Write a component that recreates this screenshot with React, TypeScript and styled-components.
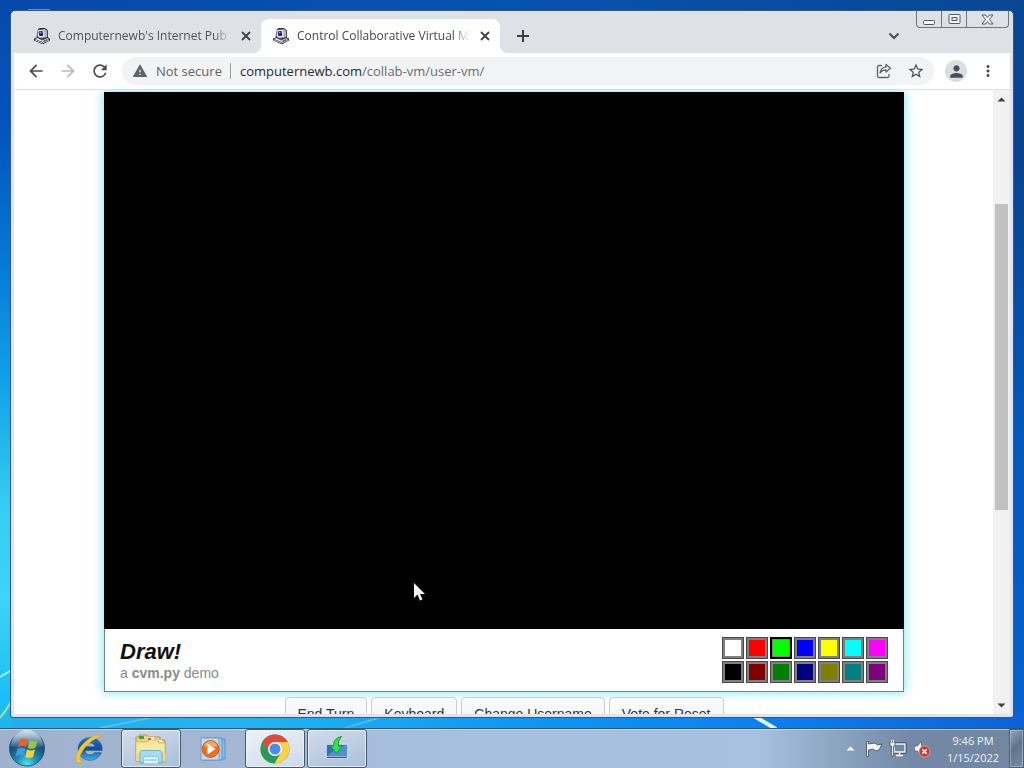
import React from "react";
import styled, { createGlobalStyle } from "styled-components";
import {
  MdArrowBack,
  MdArrowForward,
  MdRefresh,
  MdWarning,
  MdStarBorder,
  MdPerson,
  MdMoreVert,
} from "react-icons/md";

const GlobalStyle = createGlobalStyle`
  *, *::before, *::after { box-sizing: border-box; }
  body { margin: 0; font-family: "Open Sans", "Noto Sans", sans-serif; }
  button { font: inherit; color: inherit; border: 0; padding: 0; background: none; }
`;

/* Desktop */

const Desktop = styled.div`
  position: relative;
  display: flex;
  flex-direction: column;
  height: 100vh;
  overflow: hidden;
  background:
    linear-gradient(180deg, #0549ac 0%, #0455c0 18%, #0678d8 34%, #12a2e8 50%, #35cdf3 66%, #3ed3f7 78%, #1cc0f5 90%, #1aa8ea 100%) left / 12px 100% no-repeat,
    linear-gradient(90deg, #22aeea 0%, #22b4f2 24%, #0d98f5 50%, #0a80f0 75%, #0a62d8 100%) bottom / 100% 56px no-repeat,
    linear-gradient(180deg, #094794 0%, #08428c 20%, #0457ba 55%, #0563cf 100%) right / 12px 100% no-repeat,
    linear-gradient(90deg, #0549ac 0%, #0653b0 50%, #094794 100%);
`;

const Wallpaper = styled.svg`
  position: absolute;
  inset: 0;
  width: 100%;
  height: 100%;
`;

const WindowArea = styled.main`
  position: relative;
  display: flex;
  flex: 1;
  min-height: 0;
  padding: 10px;
`;

const BrowserWindow = styled.section`
  display: flex;
  flex: 1;
  flex-direction: column;
  min-width: 0;
  padding: 0 3px 3px;
  border: 1px solid #34587f;
  border-radius: 5px 5px 3px 3px;
  background: linear-gradient(180deg, #dee1e6 0, #dee1e6 42px, #dfe3f1 80px, #e2e2ea 100%);
`;

/* Tab strip */

const TabStrip = styled.header`
  display: flex;
  height: 42px;
  padding-left: 8px;
`;

const Tab = styled.div<{ $active?: boolean }>`
  position: relative;
  display: flex;
  flex: 0 1 239px;
  align-items: center;
  min-width: 0;
  margin-top: 8px;
  padding: 0 7px 0 12px;
  gap: 8px;
  border-radius: 8px 8px 0 0;
  background: ${(p) => (p.$active ? "#ffffff" : "transparent")};
  color: ${(p) => (p.$active ? "#45484b" : "#505357")};

  &::before,
  &::after {
    content: "";
    position: absolute;
    bottom: 0;
    display: ${(p) => (p.$active ? "block" : "none")};
    width: 8px;
    height: 8px;
  }
  &::before {
    right: 100%;
    background: radial-gradient(circle at 0 0, transparent 8px, #ffffff 8px);
  }
  &::after {
    left: 100%;
    background: radial-gradient(circle at 100% 0, transparent 8px, #ffffff 8px);
  }
`;

const TabTitle = styled.span`
  flex: 1;
  min-width: 0;
  overflow: hidden;
  font-size: 12px;
  line-height: 16px;
  white-space: nowrap;
  mask-image: linear-gradient(90deg, #000 calc(100% - 16px), transparent);
`;

const IconButton = styled.button<{ $size?: number; $color?: string }>`
  display: flex;
  flex: none;
  align-items: center;
  justify-content: center;
  width: ${(p) => p.$size ?? 32}px;
  height: ${(p) => p.$size ?? 32}px;
  color: ${(p) => p.$color ?? "#4a4d51"};
`;

const StripButton = styled(IconButton)`
  margin-top: 9px;
`;

const NewTabButton = styled(StripButton)`
  margin-left: 7px;
`;

const Spacer = styled.div`
  flex: 1;
`;

const CaptionButtons = styled.div`
  display: flex;
  height: 17px;
  margin: 0 1px 0 6px;
  border: 1px solid #72767b;
  border-top: 0;
  border-radius: 0 0 4px 4px;
`;

const CaptionButton = styled.button<{ $width: number }>`
  display: flex;
  align-items: center;
  justify-content: center;
  width: ${(p) => p.$width}px;
  & + & {
    border-left: 1px solid #72767b;
  }
`;

/* Toolbar */

const Toolbar = styled.nav`
  display: flex;
  align-items: center;
  height: 37px;
  padding: 0 6px;
  border-bottom: 1px solid #dcdee1;
  background: #ffffff;
`;

const Omnibox = styled.form`
  display: flex;
  flex: 1;
  align-items: center;
  min-width: 0;
  height: 28px;
  margin: 0 6px;
  padding: 0 2px 0 10px;
  border-radius: 14px;
  background: #f1f3f4;
  color: #5f6368;
  font-size: 13px;
  line-height: 20px;
`;

const Security = styled.span`
  margin-left: 8px;
  padding-right: 8px;
  border-right: 1px solid #9a9da1;
  line-height: 16px;
  white-space: nowrap;
`;

const Address = styled.a`
  flex: 1;
  min-width: 0;
  margin-left: 9px;
  overflow: hidden;
  color: #6a6d71;
  text-decoration: none;
  white-space: nowrap;
`;

const Host = styled.span`
  color: #2a2c2f;
`;

const Avatar = styled.button`
  display: flex;
  align-items: center;
  justify-content: center;
  width: 22px;
  height: 22px;
  margin: 0 5px;
  border-radius: 50%;
  background: #dadde3;
  color: #474e5b;
`;

/* Page */

const Viewport = styled.div`
  display: flex;
  flex: 1;
  min-height: 0;
  background: #ffffff;
`;

const Page = styled.div`
  display: flex;
  flex: 1;
  flex-direction: column;
  align-items: center;
  min-width: 0;
  padding: 2px 16px 0;
  overflow: hidden;
  gap: 5px;
  font-family: "Liberation Sans", Arial, sans-serif;
`;

const Display = styled.section`
  flex: none;
  width: 100%;
  max-width: 800px;
  box-shadow: 0 0 10px 1px #8ae6f4;
`;

const Screen = styled.div`
  position: relative;
  aspect-ratio: 800 / 537;
  background: #000000;
`;

const Pointer = styled.svg`
  position: absolute;
  top: 490px;
  left: 309px;
`;

const DemoBar = styled.div`
  display: flex;
  align-items: flex-start;
  justify-content: space-between;
  padding: 8px 15px;
  border: 1px solid #68848f;
  border-top: 0;
  background: #ffffff;
`;

const DemoTitle = styled.h1`
  margin: 2px 0 0;
  color: #101010;
  font-size: 22px;
  font-style: italic;
  line-height: 26px;
`;

const DemoNote = styled.p`
  margin: 0;
  color: #8a8a8a;
  font-size: 14px;
  line-height: 16px;
`;

const Palette = styled.div`
  display: grid;
  grid-template-columns: repeat(7, 22px);
  gap: 2px;
`;

const Swatch = styled.button<{ $color: string; $selected: boolean }>`
  height: 22px;
  border: ${(p) => (p.$selected ? "2px solid #000000" : "1px solid #484848")};
  background: ${(p) => p.$color};
  box-shadow: inset 0 0 0 ${(p) => (p.$selected ? 1 : 2)}px #808080;
`;

const Actions = styled.div`
  display: flex;
  flex: none;
  gap: 4px;
`;

const ActionButton = styled.button`
  padding: 6px 12px;
  border: 1px solid #c8cccc;
  border-radius: 4px;
  background: linear-gradient(180deg, #f8fcfd 0, #f6f2f1 100%);
  color: #333333;
  font-size: 14px;
  line-height: 20px;
`;

const Scrollbar = styled.div`
  display: flex;
  flex: none;
  flex-direction: column;
  align-items: center;
  width: 17px;
  margin-left: -1px;
  background: #f1f1f1;
`;

const ScrollArrow = styled.button`
  display: flex;
  align-items: center;
  justify-content: center;
  width: 17px;
  height: 18px;
`;

const ScrollTrack = styled.div`
  display: grid;
  flex: 1;
  grid-template-rows: 96fr 306fr 186fr;
`;

const ScrollThumb = styled.div`
  grid-row: 2;
  width: 13px;
  background: #c1c1c1;
`;

/* Taskbar */

const Taskbar = styled.footer`
  position: relative;
  display: flex;
  flex: none;
  height: 40px;
  border-top: 1px solid #2f5878;
  background: linear-gradient(90deg, #9fb2cd 0%, #a3b6d2 20%, #a7bfdd 42%, #a8c1de 74%, #8ca3c0 82%, #7389a7 89%, #71869f 100%);
  box-shadow: inset 0 1px 0 rgba(205, 228, 245, 0.65);
`;

const StartButton = styled.button`
  width: 54px;
`;

const TaskButton = styled.button<{ $state?: "open" | "active" }>`
  display: flex;
  align-items: center;
  justify-content: center;
  width: 60px;
  border: 1px solid ${(p) => (p.$state ? "#44596f" : "transparent")};
  border-radius: 3px;
  background: ${(p) =>
    p.$state === "active"
      ? "linear-gradient(160deg, #f0f3f8, #ccd8e8)"
      : p.$state === "open"
        ? "linear-gradient(160deg, #d2dceb, #a9bfdb)"
        : "transparent"};
  box-shadow: ${(p) => (p.$state ? "inset 0 0 0 1px rgba(240, 248, 255, 0.75)" : "none")};
`;

const TaskList = styled.div`
  display: flex;
  gap: 2px;
  margin-left: 5px;
`;

const Tray = styled.div`
  display: flex;
  align-items: center;
  gap: 6px;
  margin-right: 5px;
  margin-left: auto;
`;

const TrayButton = styled.button`
  display: flex;
  align-items: center;
  justify-content: center;
  width: 18px;
  height: 20px;
`;

const Clock = styled.time`
  width: 62px;
  margin-left: 5px;
  color: #eef4fb;
  font-size: 11px;
  line-height: 17px;
  text-align: center;
  white-space: nowrap;
`;

const ShowDesktop = styled.button`
  width: 15px;
  border: 1px solid #4b6078;
  background: linear-gradient(135deg, #93a5b9 0%, #5f748b 45%, #788ca5 100%);
  box-shadow: inset 0 0 0 1px rgba(190, 208, 226, 0.5);
`;

/* Drawings */

const ComputerIcon = () => (
  <svg width="16" height="16" viewBox="0 0 16 16" aria-hidden="true">
    <path d="M4 1 6 0h5l3 2.500v7L10 11l-5.500-.5L2.500 8.500z" fill="#2c2c3c" />
    <path d="M9 1.500 11 1l2.200 2v6L11 10z" fill="#b4b4bc" />
    <path d="M4 2 9.500 1.500l1.500 8-6 .3L3.500 8z" fill="#e6e6ec" />
    <path d="m4.500 3.500 4-.5.7 4.700-3.700.3z" fill="#10107e" />
    <path d="M5.500 4h2v1.500h-2z" fill="#8092ed" />
    <path d="M0 10.500 3.500 9l4.500 2.500 5-2.500 3 1.500v2L9.500 16H8l-8-3.500z" fill="#2c2c3c" />
    <path d="m1 11 2.500-1 4.500 2.500 5-2.300 2 .8-6.500 3z" fill="#efeff0" />
    <path d="m1 12 7.500 3L15 12" stroke="#c4c4ca" fill="none" />
    <path d="m9.500 13 3.500-1.500" stroke="#54546b" fill="none" />
  </svg>
);

const CloseIcon = () => (
  <svg width="10" height="10" viewBox="0 0 10 10" aria-hidden="true">
    <path d="m1 1 8 8m0-8-8 8" stroke="#3c4043" strokeWidth="1.800" />
  </svg>
);

const PlusIcon = () => (
  <svg width="12" height="12" viewBox="0 0 12 12" aria-hidden="true">
    <path d="M6 0v12M0 6h12" stroke="#3c4043" strokeWidth="2" />
  </svg>
);

const ChevronIcon = () => (
  <svg width="12" height="8" viewBox="0 0 12 8" aria-hidden="true">
    <path d="m1.500 1.500 4.500 4.500 4.500-4.500" fill="none" stroke="#4a4d51" strokeWidth="2" />
  </svg>
);

const ShareIcon = () => (
  <svg width="16" height="16" viewBox="0 0 16 16" fill="none" stroke="#5f6368" strokeWidth="1.300" strokeLinejoin="round" aria-hidden="true">
    <path d="M6 2.500H3A1.500 1.500 0 0 0 1.500 4v9A1.500 1.500 0 0 0 3 14.500h8.500A1.500 1.500 0 0 0 13 13v-2" />
    <path d="M10 1.500 14.500 5.300 10 9V6.800C7.500 6.800 5.500 7.800 4 10c.3-3.500 2.500-5.700 6-6.200z" />
  </svg>
);

const StartOrb = () => (
  <svg width="54" height="39" viewBox="0 0 54 39" aria-hidden="true">
    <defs>
      <radialGradient id="orb" cx="50%" cy="95%" r="85%">
        <stop offset="0" stopColor="#55e5ec" />
        <stop offset="0.35" stopColor="#1b8fb8" />
        <stop offset="0.75" stopColor="#174a78" />
        <stop offset="1" stopColor="#3c6f98" />
      </radialGradient>
      <linearGradient id="orbShine" x1="0" y1="0" x2="0" y2="1">
        <stop offset="0" stopColor="#ffffff" stopOpacity="0.8" />
        <stop offset="1" stopColor="#ffffff" stopOpacity="0.1" />
      </linearGradient>
    </defs>
    <circle cx="27" cy="19.500" r="17.500" fill="url(#orb)" stroke="#2c5778" />
    <path d="M11 17a16 16 0 0 1 32 0c-6 3-10-1-16-1s-11 4-16 1z" fill="url(#orbShine)" />
    <path d="M20 10.500c3-1.500 5.500-1.300 8 .2l-2 7.500c-2.500-1.500-5-1.500-8 0z" fill="#ed6024" />
    <path d="M29.500 11.300c2.500 1.300 5 1.300 8 0l-2 7.500c-3 1.200-5.500 1.200-8 0z" fill="#93c83e" />
    <path d="M17.500 19.700c3-1.500 5.500-1.300 8 .2l-2 7.500c-2.500-1.500-5-1.500-8 0z" fill="#3c9be2" />
    <path d="M27 20.500c2.500 1.300 5 1.300 8 0L33 28c-3 1.200-5.500 1.200-8 0z" fill="#fccb35" />
  </svg>
);

const ExplorerE = () => (
  <svg width="32" height="32" viewBox="0 0 34 34" aria-hidden="true">
    <defs>
      <linearGradient id="ie" x1="0" y1="0" x2="0" y2="1">
        <stop offset="0" stopColor="#2a6fc0" />
        <stop offset="0.5" stopColor="#154f94" />
        <stop offset="1" stopColor="#39b4ee" />
      </linearGradient>
    </defs>
    <path
      d="M18 5C10.500 5 5.500 10.500 5.500 17S10.500 29 18 29c5.500 0 10-3 12-8h-7.500c-1 1.500-2.500 2.200-4.500 2.200-3 0-5-1.700-5.300-4.700H31C31.500 10.500 26 5 18 5zm-5 9.500c.5-2.500 2.500-4 5.200-4s4.600 1.500 5 4z"
      fill="url(#ie)"
      stroke="#15508e"
      strokeWidth="0.600"
      fillRule="evenodd"
    />
    <path d="M31.500 3C26-.5 12 7 6 18 2.500 24.500 2 31 5.500 32c2 .5 4.500-1 6.500-2.500-2 .8-4 .8-4.500-1-1-3.500 2-10 7.500-15.500C21 7.500 27 3.500 31.500 3z" fill="#f2c838" stroke="#c99d22" strokeWidth="0.500" />
  </svg>
);

const FolderIcon = () => (
  <svg width="34" height="32" viewBox="0 0 34 32" aria-hidden="true">
    <path d="M2 4h3V2h8l2 2h11v3h5v21H2z" fill="#ead27a" stroke="#b8983c" />
    <path d="M5 3h5v3H5z" fill="#43a047" />
    <path d="M13 4h7v3h-7z" fill="#f6f6f6" />
    <path d="M14 5h3v2h-3z" fill="#d84343" />
    <path d="M22 7h6v2h-6z" fill="#f6f6f6" />
    <path d="M22 8h3v1h-3z" fill="#377bd0" />
    <path d="M2 9h11l2-2h8l2 3h6v18H2z" fill="#f8e8a0" stroke="#cdb35c" strokeWidth="0.700" />
    <path d="M2.500 20h29v7.500h-29z" fill="#f2d878" />
    <path d="M6 20c0-2 1-2.500 2.500-2.500h17c1.500 0 2.500.5 2.500 2.500v10h-4v-6H10v6H6z" fill="#a5dcf4" stroke="#55a6cf" strokeWidth="0.800" />
    <path d="M10 24h14v6H10z" fill="#ddf4fc" />
    <path d="M11 27h12" stroke="#72bddf" />
  </svg>
);

const MediaPlayerIcon = () => (
  <svg width="30" height="30" viewBox="0 0 30 30" aria-hidden="true">
    <path d="M9 5h18v20H9z" fill="#8dbfe3" stroke="#4a8cc0" strokeWidth="0.800" />
    <path d="M6 4h18v22H6z" fill="#a5cdea" stroke="#3f88bf" strokeWidth="0.800" />
    <path d="M3 4h18v22H3z" fill="#c0ddf0" stroke="#599dcc" strokeWidth="0.800" />
    <circle cx="12.500" cy="15" r="8.500" fill="#ec6f20" stroke="#ca4f13" strokeWidth="0.800" />
    <path d="M5.500 12a7.500 7.500 0 0 1 14 0c-4 2-9 1-14 0z" fill="#f8a362" />
    <path d="M9.500 9.500v11l8-5.500z" fill="#ffffff" />
  </svg>
);

const ChromeIcon = () => (
  <svg width="30" height="30" viewBox="0 0 30 30" aria-hidden="true">
    <circle cx="15" cy="15" r="14.500" fill="#4da353" />
    <path d="M15 15 2.440 7.750A14.500 14.500 0 0 1 27.560 7.750H15z" fill="#dd4b3e" />
    <path d="M2.440 7.750 8.700 18.600 15 15V8H8z" fill="#dd4b3e" />
    <path d="M2.440 7.750A14.500 14.500 0 0 0 14.500 29.500L21 18.500 15 15l-6.300 3.600z" fill="#2c995a" />
    <path d="M15 8h12.560A14.500 14.500 0 0 1 14.500 29.500L21 18.500z" fill="#fbd14b" />
    <circle cx="15" cy="15" r="7" fill="#f4f6f7" />
    <circle cx="15" cy="15" r="5.500" fill="#4b8bee" />
  </svg>
);

const InstallIcon = () => (
  <svg width="26" height="30" viewBox="0 0 26 30" aria-hidden="true">
    <path d="M2 10h22v14H2z" fill="#8fb8dd" stroke="#cfdeed" />
    <path d="M3 11h20v11H3z" fill="#3470b5" />
    <path d="M3 22 14 13l9-2v11z" fill="#5590cd" />
    <path d="M3 23.500h20" stroke="#2b6093" />
    <path d="M17.500 2.500C11 4 9.500 8 9.500 12H6.500l6 7.500L18 12h-3.500c-.5-4 .5-6 3-9.500z" fill="#35e052" stroke="#159a30" />
  </svg>
);

const FlagIcon = () => (
  <svg width="18" height="18" viewBox="0 0 18 18" aria-hidden="true">
    <path d="M1.500 1.500v15h2V10l5-1 2 2 3.500-1 3-6-4.500 1-2.500-2-6.500 1V1.500z" fill="#f5f8fb" stroke="#35465b" strokeWidth="0.800" />
  </svg>
);

const NetworkIcon = () => (
  <svg width="18" height="18" viewBox="0 0 18 18" aria-hidden="true">
    <path d="M5 4h11v8H5z" fill="#657b93" stroke="#27384d" strokeWidth="3" />
    <path d="M5 4h11v8H5z" fill="#74899f" stroke="#f3f7fb" strokeWidth="1.400" />
    <path d="M7 15.500h7M10.500 12v3" stroke="#f3f7fb" strokeWidth="1.400" />
    <path d="M1 2h5v4H4.500v10h-2V6H1z" fill="#f3f7fb" stroke="#33465b" strokeWidth="0.700" />
    <path d="M2.500 0v2M4.500 0v2" stroke="#f3f7fb" />
  </svg>
);

const MutedIcon = () => (
  <svg width="18" height="18" viewBox="0 0 18 18" aria-hidden="true">
    <path d="M1.500 6h3l4-4.500v14L4.500 11h-3z" fill="#f5f8fb" stroke="#4a5b70" strokeWidth="0.700" />
    <circle cx="11.500" cy="11.500" r="5.500" fill="#cf3830" stroke="#f0c4c0" strokeWidth="0.600" />
    <path d="m9.300 9.300 4.400 4.400m0-4.400-4.400 4.400" stroke="#ffffff" strokeWidth="1.600" />
  </svg>
);

const TriangleIcon = ({ down = false, color = "#404040" }: { down?: boolean; color?: string }) => (
  <svg width="9" height="5" viewBox="0 0 9 5" aria-hidden="true">
    <path d={down ? "M.5.500h8l-4 4z" : "M.5 4.500h8l-4-4z"} fill={color} />
  </svg>
);

const TABS = [
  { title: "Computernewb's Internet Pub Hub", active: false },
  { title: "Control Collaborative Virtual Machines", active: true },
];

const COLORS = [
  ["White", "#ffffff"],
  ["Red", "#ff0000"],
  ["Lime", "#00ff00"],
  ["Blue", "#0000ff"],
  ["Yellow", "#ffff00"],
  ["Cyan", "#00ffff"],
  ["Magenta", "#ff00ff"],
  ["Black", "#000000"],
  ["Maroon", "#800000"],
  ["Green", "#008000"],
  ["Navy", "#000080"],
  ["Olive", "#808000"],
  ["Teal", "#008080"],
  ["Purple", "#800080"],
];

const ACTIONS = ["End Turn", "Keyboard", "Change Username", "Vote for Reset"];

export default function App() {
  const [selected, setSelected] = React.useState("Lime");

  return (
    <Desktop>
      <GlobalStyle />
      <Wallpaper viewBox="0 0 1024 768" preserveAspectRatio="none" aria-hidden="true">
        <path d="M0 677 12 670" stroke="#a8ebfb" strokeWidth="2" />
        <path d="M0 718Q8 708 12 700" stroke="#a8e08a" strokeWidth="2" fill="none" />
        <path d="M345 728 385 716" stroke="#4cb8f4" strokeWidth="2" />
        <path d="M100 728 150 718" stroke="#4cc2ee" strokeWidth="2" />
        <path d="M754 716 776 729" stroke="#e3f3ff" strokeWidth="4" />
        <path d="M28 10h22" stroke="#b9d0ee" strokeWidth="1" />
      </Wallpaper>

      <WindowArea>
        <BrowserWindow>
          <TabStrip>
            {TABS.map((tab) => (
              <Tab key={tab.title} $active={tab.active}>
                <ComputerIcon />
                <TabTitle>{tab.title}</TabTitle>
                <IconButton $size={16} aria-label="Close tab">
                  <CloseIcon />
                </IconButton>
              </Tab>
            ))}
            <NewTabButton aria-label="New tab">
              <PlusIcon />
            </NewTabButton>
            <Spacer />
            <StripButton aria-label="Search tabs">
              <ChevronIcon />
            </StripButton>
            <CaptionButtons>
              <CaptionButton $width={24} aria-label="Minimize">
                <svg width="13" height="13" viewBox="0 0 13 13" aria-hidden="true">
                  <rect x="0.500" y="7.500" width="11" height="4" rx="1" fill="#f7f8f9" stroke="#55595e" />
                </svg>
              </CaptionButton>
              <CaptionButton $width={25} aria-label="Maximize">
                <svg width="13" height="13" viewBox="0 0 13 13" aria-hidden="true">
                  <rect x="1" y="1.500" width="11" height="9" rx="1" fill="#f7f8f9" stroke="#55595e" />
                  <rect x="4" y="4.500" width="5" height="3" fill="#dee1e6" stroke="#55595e" />
                </svg>
              </CaptionButton>
              <CaptionButton $width={42} aria-label="Close">
                <svg width="13" height="13" viewBox="0 0 13 13" aria-hidden="true">
                  <path d="M1 2h3.500l2 2.500 2-2.500H12L8.500 6.500 12 11H8.500l-2-2.500-2 2.500H1l3.500-4.500z" fill="#f7f8f9" stroke="#55595e" />
                </svg>
              </CaptionButton>
            </CaptionButtons>
          </TabStrip>

          <Toolbar>
            <IconButton aria-label="Back">
              <MdArrowBack size={20} />
            </IconButton>
            <IconButton aria-label="Forward" $color="#b8babd">
              <MdArrowForward size={20} />
            </IconButton>
            <IconButton aria-label="Reload">
              <MdRefresh size={20} />
            </IconButton>
            <Omnibox onSubmit={(e) => e.preventDefault()}>
              <MdWarning size={16} />
              <Security>Not secure</Security>
              <Address href="#address">
                <Host>computernewb.com</Host>/collab-vm/user-vm/
              </Address>
              <IconButton type="button" aria-label="Share">
                <ShareIcon />
              </IconButton>
              <IconButton type="button" aria-label="Bookmark">
                <MdStarBorder size={18} />
              </IconButton>
            </Omnibox>
            <Avatar aria-label="Profile">
              <MdPerson size={19} />
            </Avatar>
            <IconButton aria-label="Menu">
              <MdMoreVert size={18} />
            </IconButton>
          </Toolbar>

          <Viewport>
            <Page>
              <Display>
                <Screen>
                  <Pointer width="13" height="20" viewBox="0 0 13 20" aria-hidden="true">
                    <path d="M1 1v15l3.500-3.500L7 18.500l2.500-1L7 12h5z" fill="#f4f4f4" />
                  </Pointer>
                </Screen>
                <DemoBar>
                  <div>
                    <DemoTitle>Draw!</DemoTitle>
                    <DemoNote>
                      a <b>cvm.py</b> demo
                    </DemoNote>
                  </div>
                  <Palette>
                    {COLORS.map(([name, value]) => (
                      <Swatch
                        key={name}
                        aria-label={name}
                        $color={value}
                        $selected={name === selected}
                        onClick={() => setSelected(name)}
                      />
                    ))}
                  </Palette>
                </DemoBar>
              </Display>
              <Actions>
                {ACTIONS.map((label) => (
                  <ActionButton key={label}>{label}</ActionButton>
                ))}
              </Actions>
            </Page>
            <Scrollbar>
              <ScrollArrow aria-label="Scroll up">
                <TriangleIcon />
              </ScrollArrow>
              <ScrollTrack>
                <ScrollThumb />
              </ScrollTrack>
              <ScrollArrow aria-label="Scroll down">
                <TriangleIcon down />
              </ScrollArrow>
            </Scrollbar>
          </Viewport>
        </BrowserWindow>
      </WindowArea>

      <Taskbar>
        <StartButton aria-label="Start">
          <StartOrb />
        </StartButton>
        <TaskList>
          <TaskButton aria-label="Internet Explorer">
            <ExplorerE />
          </TaskButton>
          <TaskButton $state="open" aria-label="Windows Explorer">
            <FolderIcon />
          </TaskButton>
          <TaskButton aria-label="Media Player">
            <MediaPlayerIcon />
          </TaskButton>
          <TaskButton $state="active" aria-label="Chrome">
            <ChromeIcon />
          </TaskButton>
          <TaskButton $state="open" aria-label="Installer">
            <InstallIcon />
          </TaskButton>
        </TaskList>
        <Tray>
          <TrayButton aria-label="Show hidden icons">
            <TriangleIcon color="#f3f7fb" />
          </TrayButton>
          <TrayButton aria-label="Action Center">
            <FlagIcon />
          </TrayButton>
          <TrayButton aria-label="Network">
            <NetworkIcon />
          </TrayButton>
          <TrayButton aria-label="Volume">
            <MutedIcon />
          </TrayButton>
          <Clock dateTime="2022-01-15T21:46">
            9:46 PM
            <br />
            1/15/2022
          </Clock>
        </Tray>
        <ShowDesktop aria-label="Show desktop" />
      </Taskbar>
    </Desktop>
  );
}
